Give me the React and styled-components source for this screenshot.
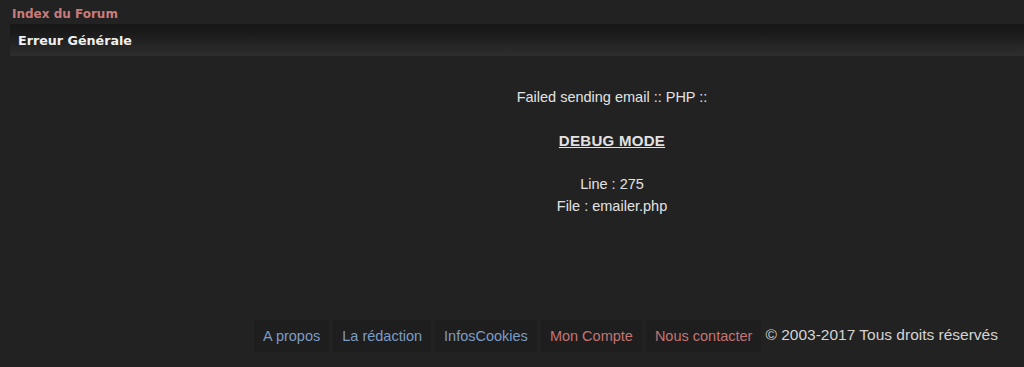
import React from 'react';
import styled, { createGlobalStyle } from 'styled-components';

const Global = createGlobalStyle`
  html, body {
    margin: 0;
    padding: 0;
    background: #222222;
  }
`;

const Page = styled.div`
  width: 1024px;
  height: 367px;
  background: #222222;
  display: flex;
  flex-direction: column;
  font-family: "Liberation Sans", Arial, sans-serif;
`;

const Crumb = styled.a`
  display: block;
  padding: 7px 0 0 12px;
  height: 17px;
  font-family: "DejaVu Sans", Verdana, sans-serif;
  font-weight: bold;
  font-size: 12px;
  color: #c97c7c;
  text-decoration: none;
`;

const TitleBar = styled.div`
  margin-left: 10px;
  height: 32px;
  display: flex;
  align-items: center;
  padding-left: 8px;
  background: linear-gradient(to bottom, #161616 0%, #1c1c1c 35%, #2e2e2e 100%);
  h1 {
    margin: 0;
    font-family: "DejaVu Sans", Verdana, sans-serif;
    font-size: 12.7px;
    font-weight: bold;
    color: #f0f0f0;
  }
`;

const Message = styled.div`
  margin-top: 31px;
  padding-left: 200px;
  text-align: center;
  font-size: 14.5px;
  line-height: 21.5px;
  color: #e2e2e2;
  b {
    font-weight: bold;
    font-size: 15px;
    letter-spacing: 0.3px;
  }
`;

const Footer = styled.div`
  margin-top: auto;
  margin-bottom: 15px;
  display: flex;
  justify-content: flex-end;
  align-items: center;
  gap: 4px;
  padding-right: 26px;
`;

const FooterLink = styled.a`
  display: flex;
  align-items: center;
  height: 31px;
  padding: 0 9px 1px;
  background: #1e1e1e;
  font-size: 14.5px;
  color: ${p => (p.$red ? '#c47474' : '#7d9cc4')};
  text-decoration: none;
`;

const Copy = styled.span`
  font-size: 15.5px;
  color: #d4d4d4;
  margin-bottom: 2px;
`;

export default function App() {
  return (
    <Page>
      <Global />
      <Crumb href="#">Index du Forum</Crumb>
      <TitleBar>
        <h1>Erreur Générale</h1>
      </TitleBar>
      <Message>
        Failed sending email :: PHP ::
        <br />
        <br />
        <b><u>DEBUG MODE</u></b>
        <br />
        <br />
        Line : 275
        <br />
        File : emailer.php
      </Message>
      <Footer>
        <FooterLink href="#">A propos</FooterLink>
        <FooterLink href="#">La rédaction</FooterLink>
        <FooterLink href="#">InfosCookies</FooterLink>
        <FooterLink href="#" $red>Mon Compte</FooterLink>
        <FooterLink href="#" $red>Nous contacter</FooterLink>
        <Copy>© 2003-2017 Tous droits réservés</Copy>
      </Footer>
    </Page>
  );
}
